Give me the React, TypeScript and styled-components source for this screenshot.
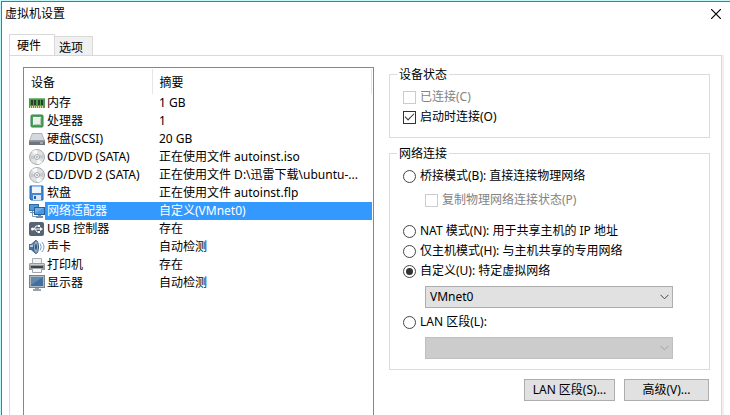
import React, { useState } from "react";
import styled, { createGlobalStyle, css } from "styled-components";

const GlobalStyle = createGlobalStyle`
  * { box-sizing: border-box; }
  body {
    margin: 0;
    background: #fff;
    color: #000;
    font: 12px/18px "Noto Sans", "Noto Sans CJK SC", sans-serif;
    overflow: hidden;
  }
  button, select, input { font: inherit; color: inherit; margin: 0; }
`;

const Window = styled.main`
  min-height: 100vh;
  display: flex;
  flex-direction: column;
  border-left: 1px solid #c4f6fa;
  border-top: 1px solid #c4f6fa;
`;

const Frame = styled.div`
  flex: 1;
  display: flex;
  flex-direction: column;
  border-left: 1px solid #3b80a8;
  border-top: 1px solid #3b80a8;
`;

const TitleBar = styled.header`
  display: flex;
  justify-content: space-between;
  align-items: center;
  height: 24px;
  padding: 0 4px 0 3px;
`;

const Title = styled.h1`
  margin: 0;
  font-size: 12px;
  font-weight: 400;
`;

const CloseButton = styled.button`
  display: grid;
  place-items: center;
  width: 20px;
  height: 20px;
  padding: 0;
  border: 0;
  background: none;
`;

const TabList = styled.div`
  display: flex;
  align-items: flex-end;
  height: 22px;
  margin: 8px 7px -1px;
`;

const Tab = styled.button<{ $active: boolean }>`
  padding: 2px 9px 0 4px;
  border: 1px solid #d9d9d9;
  height: 20px;
  line-height: 18px;
  background: #f0f0f0;
  border-left: 0;
  ${(p) =>
    p.$active &&
    css`
      height: 22px;
      padding: 1px 13px 0 7px;
      border-left: 1px solid #d9d9d9;
      border-bottom-color: #fff;
      background: #fff;
    `}
`;

const Panel = styled.section`
  flex: 1;
  display: grid;
  grid-template-columns: minmax(0, 351fr) minmax(0, 321fr);
  column-gap: 15px;
  margin: 0 8px 0 7px;
  padding: 10px 11px 0 13px;
  border: 1px solid #d9d9d9;
  border-bottom: 0;
  box-shadow: 2px 0 #f0f0f0;
`;

const DeviceList = styled.div`
  margin-top: 1px;
  border: 1px solid #828790;
  border-bottom: 0;
  padding: 1px 1px 0 0;
`;

const Table = styled.table`
  width: 100%;
  table-layout: fixed;
  border-collapse: collapse;
`;

const NameColumn = styled.col`
  width: 128px;
`;

const HeadCell = styled.th`
  height: 25px;
  padding: 2px 0 0 7px;
  border-right: 1px solid #e5e5e5;
  text-align: left;
  font-weight: 400;
`;

const Row = styled.tr<{ $selected: boolean }>`
  height: 18px;
  white-space: nowrap;
  color: ${(p) => (p.$selected ? "#fff" : "#000")};
  --highlight: ${(p) => (p.$selected ? "#3399ff" : "transparent")};
`;

const NameCell = styled.td`
  padding: 0;
`;

const Device = styled.div`
  display: flex;
  align-items: center;
  height: 18px;
  padding-left: 5px;
`;

const DeviceName = styled.span`
  flex: 1;
  padding-left: 2px;
  background: var(--highlight);
`;

const SummaryCell = styled.td`
  padding: 0 0 0 7px;
  overflow: hidden;
  background: var(--highlight);
`;

const Group = styled.fieldset`
  min-width: 0;
  margin: 0 0 7px;
  padding: 5px 13px 10px;
  border: 1px solid #dcdcdc;
`;

const Legend = styled.legend`
  margin-left: -6px;
  padding: 0 2px;
  height: 16px;
  line-height: 18px;
`;

const Option = styled.label<{ $disabled?: boolean }>`
  display: flex;
  align-items: center;
  gap: 4px;
  height: 20px;
  white-space: nowrap;
  color: ${(p) => (p.$disabled ? "#838383" : "#000")};
`;

const Indented = styled.div<{ $control?: boolean }>`
  margin: ${(p) => (p.$control ? "5px 23px 4px 22px" : "4px 0 11px 22px")};
  &:last-child { margin-bottom: 0; }
`;

const CheckInput = styled.input`
  appearance: none;
  display: grid;
  place-items: center;
  flex: none;
  width: 13px;
  height: 13px;
  border: 1px solid #333;
  background: #fff;
  &:disabled { border-color: #ccc; }
  &:checked::after {
    content: "";
    width: 8px;
    height: 4px;
    margin-bottom: 3px;
    border: solid #333;
    border-width: 0 0 1px 1px;
    transform: rotate(-45deg);
  }
`;

const RadioInput = styled.input`
  appearance: none;
  display: grid;
  place-items: center;
  flex: none;
  width: 13px;
  height: 13px;
  border: 1px solid #444;
  border-radius: 50%;
  background: #fff;
  &:checked::after {
    content: "";
    width: 7px;
    height: 7px;
    border-radius: 50%;
    background: #333;
  }
`;

const SelectBox = styled.div`
  display: grid;
  align-items: center;
  justify-items: end;
  > * { grid-area: 1 / 1; }
  svg { margin-right: 4px; pointer-events: none; }
`;

const Select = styled.select`
  appearance: none;
  width: 100%;
  height: 22px;
  padding: 0 20px 0 4px;
  border: 1px solid #adadad;
  border-radius: 0;
  background: #e1e1e1;
  &:disabled {
    border-color: #bfbfbf;
    background: #ccc;
    opacity: 1;
  }
`;

const Actions = styled.div`
  display: flex;
  justify-content: flex-end;
  gap: 9px;
  margin: 9px 1px 0 0;
`;

const ActionButton = styled.button`
  height: 22px;
  min-width: 85px;
  padding: 0 5px;
  border: 1px solid #adadad;
  background: #e1e1e1;
  line-height: 20px;
  white-space: nowrap;
  &:first-child { min-width: 91px; }
`;

const Chevron = ({ color }: { color: string }) => (
  <svg width="9" height="6" viewBox="0 0 9 6" fill="none" stroke={color} aria-hidden="true">
    <path d="M.5.8l4 4 4-4" />
  </svg>
);

const drawings: Record<string, React.ReactNode> = {
  memory: (
    <>
      <path d="M0 3h16v10H0z" fill="#4b9a52" />
      <path d="M0 3h16v1H0z" fill="#7fbf7d" />
      <path d="M2 5h2v5H2zM5 5h2v5H5zM9 5h2v5H9zM12 5h2v5h-2z" fill="#26402b" />
      <path d="M1 12h14" stroke="#d9dc9a" strokeWidth="2" strokeDasharray="1 1" />
    </>
  ),
  cpu: (
    <>
      <rect x="2" y="2" width="12" height="12" rx="1" fill="#4ca45c" stroke="#2f8644" />
      <rect x="4" y="4" width="8" height="8" rx="1" fill="#e9f1e9" />
      <path d="M4.500 11.500v-7h7" fill="none" stroke="#fff" />
      <path d="M5 11.500h6.500V5" fill="none" stroke="#b4ccb6" />
    </>
  ),
  disk: (
    <>
      <path d="M3 2h10l3 8H0z" fill="#aab0b7" />
      <path d="M3.500 3h9l2.300 6H1.200z" fill="#d5d8dc" />
      <path d="M0 9.500h16V14H0z" fill="#6c747e" />
      <path d="M0 10h16" stroke="#a0a7af" />
      <path d="M11 11.500h3v1h-3z" fill="#d3dde3" />
    </>
  ),
  disc: (
    <>
      <circle cx="8" cy="8" r="7.500" fill="#dfe1e3" stroke="#a9adb1" />
      <path d="M8 8L3 2.500A7 7 0 0 1 8 1zM8 8l5 5.500A7 7 0 0 1 8 15z" fill="#fafafa" />
      <path d="M8 8L1.500 6v5zM8 8l6.500-3v5z" fill="#c6cace" />
      <circle cx="8" cy="8" r="2.500" fill="#f8f8f8" stroke="#a4a9ae" />
      <circle cx="8" cy="8" r="1" fill="#a3a9af" />
    </>
  ),
  floppy: (
    <>
      <path d="M1 1h13v14H2l-1-1z" fill="#3f8ad8" stroke="#276bb2" />
      <path d="M3 1h9v7H3z" fill="#eff5fb" />
      <path d="M3 1.500h9" stroke="#94c1ed" />
      <path d="M4 10h8v5H4z" fill="#dde6ef" />
      <path d="M5 11h2v3H5z" fill="#285f9b" />
    </>
  ),
  network: (
    <>
      <rect x="0.500" y="1.500" width="9" height="6" fill="#5598d6" stroke="#2f6ba6" />
      <path d="M3.500 8v5.500H8" fill="none" stroke="#7c9ab8" />
      <path d="M1 9.500h4" stroke="#6a8dad" />
      <rect x="5.500" y="4.500" width="10" height="7" fill="#4b96dc" stroke="#2a5f99" />
      <path d="M6 5h9l-9 5z" fill="#72b1ea" />
      <path d="M9 12h3v1h2v2H7v-2h2z" fill="#6e8fae" />
    </>
  ),
  usb: (
    <>
      <rect x="0" y="1" width="15" height="14" rx="2" fill="#566474" />
      <path d="M3 8h9M5 8l2-3h2M6 8l2 3h2" fill="none" stroke="#fff" />
      <circle cx="3.500" cy="8" r="1.500" fill="#fff" />
      <path d="M11 6l3 2-3 2zM9 4h2v2H9zM9 10h2v2H9z" fill="#fff" />
    </>
  ),
  sound: (
    <>
      <path d="M0 5h2l5-4v14l-5-4H0z" fill="#4c6f93" />
      <path d="M1 6h2l3-3v5H1z" fill="#a9c9e4" />
      <ellipse cx="7" cy="8" rx="2.500" ry="6.500" fill="#8fabc7" stroke="#3d5d7e" />
      <ellipse cx="7" cy="8" rx="1" ry="3" fill="#35536f" />
      <path d="M11 4.500q2.500 3.500 0 7M13 3q4 5 0 10" fill="none" stroke="#6ea3d3" />
    </>
  ),
  printer: (
    <>
      <path d="M3.500 1.500h9V7h-9z" fill="#f1f2f4" stroke="#aaaeb3" />
      <path d="M0 7l1-1h14l1 1v6H0z" fill="#969ba1" />
      <path d="M1 7.500h14" stroke="#c9ccd0" />
      <path d="M2 9h12v2H2z" fill="#3f444b" />
      <path d="M3.500 11.500h9v4h-9z" fill="#f7f7f7" stroke="#a1a5aa" />
    </>
  ),
  display: (
    <>
      <rect x="0.500" y="0.500" width="15" height="12" fill="#aeb8c2" stroke="#76838f" />
      <path d="M2 2h12v9H2z" fill="#40709f" />
      <path d="M2 2h12L2 10z" fill="#6288ae" />
      <path d="M6 13h4v1h2v2H4v-2h2z" fill="#97a2ad" />
    </>
  ),
};

const DeviceIcon = ({ kind }: { kind: string }) => (
  <svg width="16" height="16" viewBox="0 0 16 16" aria-hidden="true">
    {drawings[kind]}
  </svg>
);

const devices = [
  { icon: "memory", name: "内存", summary: "1 GB" },
  { icon: "cpu", name: "处理器", summary: "1" },
  { icon: "disk", name: "硬盘(SCSI)", summary: "20 GB" },
  { icon: "disc", name: "CD/DVD (SATA)", summary: "正在使用文件 autoinst.iso" },
  { icon: "disc", name: "CD/DVD 2 (SATA)", summary: "正在使用文件 D:\\迅雷下载\\ubuntu-..." },
  { icon: "floppy", name: "软盘", summary: "正在使用文件 autoinst.flp" },
  { icon: "network", name: "网络适配器", summary: "自定义(VMnet0)" },
  { icon: "usb", name: "USB 控制器", summary: "存在" },
  { icon: "sound", name: "声卡", summary: "自动检测" },
  { icon: "printer", name: "打印机", summary: "存在" },
  { icon: "display", name: "显示器", summary: "自动检测" },
];

export default function App() {
  const [selected, setSelected] = useState(6);
  const [mode, setMode] = useState("custom");

  const radio = (value: string, text: string) => (
    <Option>
      <RadioInput type="radio" name="mode" checked={mode === value} onChange={() => setMode(value)} />
      {text}
    </Option>
  );

  return (
    <Window>
      <GlobalStyle />
      <Frame>
        <TitleBar>
          <Title>虚拟机设置</Title>
          <CloseButton aria-label="关闭">
            <svg width="10" height="10" viewBox="0 0 10 10" stroke="#000" strokeWidth="1.200" aria-hidden="true">
              <path d="M0 0l10 10M10 0L0 10" />
            </svg>
          </CloseButton>
        </TitleBar>
        <TabList role="tablist">
          <Tab role="tab" aria-selected="true" $active>硬件</Tab>
          <Tab role="tab" aria-selected="false" $active={false}>选项</Tab>
        </TabList>
        <Panel role="tabpanel">
          <DeviceList>
            <Table>
              <colgroup>
                <NameColumn />
                <col />
              </colgroup>
              <thead>
                <tr>
                  <HeadCell>设备</HeadCell>
                  <HeadCell>摘要</HeadCell>
                </tr>
              </thead>
              <tbody>
                {devices.map((d, i) => (
                  <Row key={d.name} $selected={i === selected} onClick={() => setSelected(i)}>
                    <NameCell>
                      <Device>
                        <DeviceIcon kind={d.icon} />
                        <DeviceName>{d.name}</DeviceName>
                      </Device>
                    </NameCell>
                    <SummaryCell>{d.summary}</SummaryCell>
                  </Row>
                ))}
              </tbody>
            </Table>
          </DeviceList>
          <div>
            <Group>
              <Legend>设备状态</Legend>
              <Option $disabled>
                <CheckInput type="checkbox" disabled />
                已连接(C)
              </Option>
              <Option>
                <CheckInput type="checkbox" defaultChecked />
                启动时连接(O)
              </Option>
            </Group>
            <Group>
              <Legend>网络连接</Legend>
              {radio("bridged", "桥接模式(B): 直接连接物理网络")}
              <Indented>
                <Option $disabled>
                  <CheckInput type="checkbox" disabled />
                  复制物理网络连接状态(P)
                </Option>
              </Indented>
              {radio("nat", "NAT 模式(N): 用于共享主机的 IP 地址")}
              {radio("host", "仅主机模式(H): 与主机共享的专用网络")}
              {radio("custom", "自定义(U): 特定虚拟网络")}
              <Indented $control>
                <SelectBox>
                  <Select aria-label="特定虚拟网络">
                    <option>VMnet0</option>
                  </Select>
                  <Chevron color="#444" />
                </SelectBox>
              </Indented>
              {radio("lan", "LAN 区段(L):")}
              <Indented $control>
                <SelectBox>
                  <Select aria-label="LAN 区段" disabled />
                  <Chevron color="#a0a0a0" />
                </SelectBox>
              </Indented>
            </Group>
            <Actions>
              <ActionButton>LAN 区段(S)...</ActionButton>
              <ActionButton>高级(V)...</ActionButton>
            </Actions>
          </div>
        </Panel>
      </Frame>
    </Window>
  );
}
